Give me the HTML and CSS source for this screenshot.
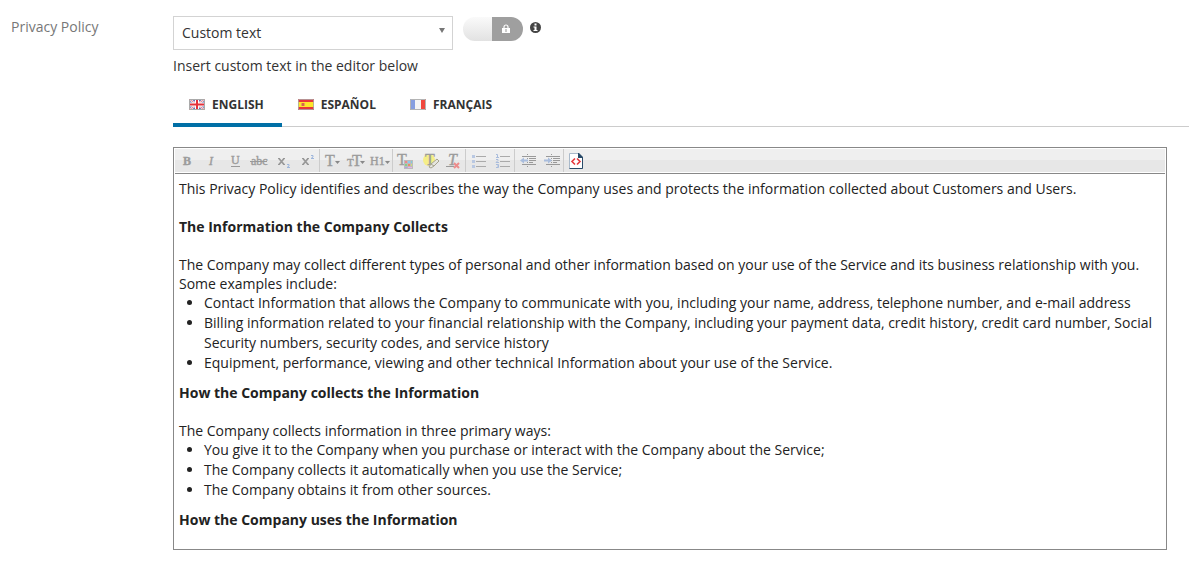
FILE: index.html
```html
<!DOCTYPE html>
<html lang="en">
<head>
	<meta charset="UTF-8">
	<title>Privacy Policy</title>
	<link rel="stylesheet" href="styles.css">
</head>
<body>
	<form class="field" action="##">
		<label class="field-label" for="policy">Privacy Policy</label>
		<div class="field-main">
			<div class="controls">
				<div class="select-wrap">
					<select class="select" id="policy">
						<option>Custom text</option>
					</select>
					<svg class="arrow" width="6" height="5" viewBox="0 0 6 5"><path d="M0 0h6L3 5z" fill="#777"/></svg>
				</div>
				<label class="switch">
					<input class="switch-input" type="checkbox" aria-label="Lock setting">
					<svg class="lock" width="8" height="9" viewBox="0 0 8 9">
						<path d="M2 4V3a2 2 0 0 1 4 0v1" fill="none" stroke="#fff" stroke-width="1.2"/>
						<path d="M0 4h8v5H0z" fill="#fff"/>
						<path d="M3.5 5h1v3h-1z" fill="#999"/>
					</svg>
				</label>
				<button class="info" type="button" aria-label="Help">
					<svg width="11" height="11" viewBox="0 0 11 11">
						<circle cx="5.5" cy="5.5" r="5.5" fill="#444"/>
						<path d="M4.5 1.5h2v2h-2zM3.5 4.5h3V8h1v1h-4V8h1V5.5h-1z" fill="#fff"/>
					</svg>
				</button>
			</div>
			<p class="hint">Insert custom text in the editor below</p>

			<div class="tabs" role="tablist">
				<button class="tab active" type="button" role="tab" aria-selected="true">
					<svg width="16" height="11" viewBox="0 0 16 11">
						<path d="M0 0h16v11H0z" fill="#6670b8"/>
						<path d="M0 0l16 11M16 0L0 11" stroke="#fff" stroke-width="2"/>
						<path d="M0 0l16 11M16 0L0 11" stroke="#e06068" stroke-width=".8"/>
						<path d="M8 0v11M0 5.5h16" stroke="#fff" stroke-width="4"/>
						<path d="M8 0v11M0 5.5h16" stroke="#e4303c" stroke-width="2"/>
						<path d="M.5.5h15v10H.5z" fill="none" stroke="#aaa"/>
					</svg>
					ENGLISH
				</button>
				<button class="tab" type="button" role="tab" aria-selected="false">
					<svg width="16" height="11" viewBox="0 0 16 11">
						<path d="M0 0h16v11H0z" fill="#e8363a"/>
						<path d="M0 3h16v5H0z" fill="#ffe529"/>
						<path d="M3 4h1v3H3zM6 4h1v3H6z" fill="#e5a550"/>
						<path d="M4 4h2v3H4z" fill="#d9634a"/>
						<path d="M.5.5h15v10H.5z" fill="none" stroke="#aaa" stroke-opacity=".8"/>
					</svg>
					ESPAÑOL
				</button>
				<button class="tab" type="button" role="tab" aria-selected="false">
					<svg width="16" height="11" viewBox="0 0 16 11">
						<path d="M0 0h5v11H0z" fill="#869ee0"/>
						<path d="M5 0h6v11H5z" fill="#f4f4f4"/>
						<path d="M11 0h5v11h-5z" fill="#f0483e"/>
						<path d="M.5.5h15v10H.5z" fill="none" stroke="#b4b4b4"/>
					</svg>
					FRANÇAIS
				</button>
			</div>

			<div class="editor">
				<div class="toolbar" role="toolbar" aria-label="Formatting">
					<div class="group">
						<button class="tool" type="button" title="Bold">
							<svg class="icon" viewBox="0 0 24 24"><text class="glyph bold" x="8" y="16">B</text></svg>
						</button>
						<button class="tool" type="button" title="Italic">
							<svg class="icon" viewBox="0 0 24 24"><text class="glyph italic" x="10" y="16">I</text></svg>
						</button>
						<button class="tool" type="button" title="Underline">
							<svg class="icon" viewBox="0 0 24 24">
								<text class="glyph" x="8" y="15">U</text>
								<path d="M8 17.500h9" stroke="#999"/>
							</svg>
						</button>
						<button class="tool" type="button" title="Strikethrough">
							<svg class="icon" viewBox="0 0 24 24">
								<text class="glyph" x="4" y="16">abc</text>
								<path d="M3 12.500h17" stroke="#999"/>
							</svg>
						</button>
						<button class="tool" type="button" title="Subscript">
							<svg class="icon" viewBox="0 0 24 24">
								<path d="M8 9.500l5 6M13 9.500l-5 6" stroke="#999" stroke-width="1.800"/>
								<path d="M7 9.500h2M12 9.500h2M7 15.500h2M12 15.500h2" stroke="#999"/>
								<path d="M16 15.500h2v1.500l-2 1.500h3" fill="none" stroke="#9fb7dc"/>
							</svg>
						</button>
						<button class="tool" type="button" title="Superscript">
							<svg class="icon" viewBox="0 0 24 24">
								<path d="M8 9.500l5 6M13 9.500l-5 6" stroke="#999" stroke-width="1.800"/>
								<path d="M7 9.500h2M12 9.500h2M7 15.500h2M12 15.500h2" stroke="#999"/>
								<path d="M16 6.500h2V8l-2 1.500h3" fill="none" stroke="#9fb7dc"/>
							</svg>
						</button>
					</div>
					<div class="group">
						<button class="tool" type="button" title="Font">
							<svg class="icon" viewBox="0 0 24 24">
								<text class="glyph large" x="5" y="17">T</text>
								<path d="M15 12h5l-2.500 3z" fill="#888"/>
							</svg>
						</button>
						<button class="tool" type="button" title="Font size">
							<svg class="icon" viewBox="0 0 24 24">
								<text class="glyph small" x="3" y="17">T</text>
								<text class="glyph large" x="8" y="17">T</text>
								<path d="M16 12h5l-2.500 3z" fill="#888"/>
							</svg>
						</button>
						<button class="tool" type="button" title="Heading">
							<svg class="icon" viewBox="0 0 24 24">
								<text class="glyph" x="2" y="16">H1</text>
								<path d="M17 12h5l-2.500 3z" fill="#888"/>
							</svg>
						</button>
					</div>
					<div class="group">
						<button class="tool" type="button" title="Text color">
							<svg class="icon" viewBox="0 0 24 24">
								<text class="glyph large" x="4" y="16">T</text>
								<path d="M11 11h9v9h-9z" fill="#bbb"/>
								<path d="M12 12h2v2h-2z" fill="#ef8888"/>
								<path d="M15 12h2v2h-2z" fill="#8cc8f0"/>
								<path d="M18 12h1v2h-1z" fill="#7dcce0"/>
								<path d="M12 15h2v2h-2z" fill="#85d089"/>
								<path d="M15 15h2v2h-2z" fill="#e88d68"/>
								<path d="M18 15h1v2h-1z" fill="#d0dd77"/>
								<path d="M12 18h2v1h-2z" fill="#a8a0e8"/>
								<path d="M15 18h4v1h-4z" fill="#e9b0e9"/>
							</svg>
						</button>
						<button class="tool" type="button" title="Highlight">
							<svg class="icon" viewBox="0 0 24 24">
								<circle cx="12" cy="11" r="6" fill="#f5ee87"/>
								<text class="glyph large" x="8" y="16">T</text>
								<path d="M12 18l2-3 6-5 2 2-5 5-3 2z" fill="#e5e5df" stroke="#a5a38e"/>
								<path d="M14 15l3 2" stroke="#a5a38e"/>
							</svg>
						</button>
						<button class="tool" type="button" title="Remove formatting">
							<svg class="icon" viewBox="0 0 24 24">
								<text class="glyph large italic" x="7" y="16">T</text>
								<path d="M5 17.500h8" stroke="#999"/>
								<path d="M13 14l5 5M18 14l-5 5" stroke="#ed8c8c" stroke-width="2"/>
							</svg>
						</button>
					</div>
					<div class="group">
						<button class="tool" type="button" title="Bullet list">
							<svg class="icon" viewBox="0 0 24 24">
								<path d="M10 7.500h10M10 12.500h10M10 17.500h10" stroke="#aaa"/>
								<path d="M6 6h3v3H6zM6 11h3v3H6zM6 16h3v3H6z" fill="#b9c8e2"/>
							</svg>
						</button>
						<button class="tool" type="button" title="Numbered list">
							<svg class="icon" viewBox="0 0 24 24">
								<path d="M10 7.500h10M10 12.500h10M10 17.500h10" stroke="#aaa"/>
								<path d="M6 5.500h1.500v3M6 8.500h3M6 10.500h2v1l-2 2h3M6 15.500h2.500v3H6M7 17h1" fill="none" stroke="#a9bcdc"/>
							</svg>
						</button>
					</div>
					<div class="group">
						<button class="tool" type="button" title="Outdent">
							<svg class="icon" viewBox="0 0 24 24">
								<path d="M7 7.500h14M14 9.500h7M14 11.500h7M14 13.500h4M7 15.500h14" stroke="#999"/>
								<path d="M12.500 5v14" stroke="#999" stroke-dasharray="1 1"/>
								<path d="M5 11.500l4-3v2h4v2H9v2z" fill="#a9bddd"/>
							</svg>
						</button>
						<button class="tool" type="button" title="Indent">
							<svg class="icon" viewBox="0 0 24 24">
								<path d="M7 7.500h14M14 9.500h7M14 11.500h7M14 13.500h4M7 15.500h14" stroke="#999"/>
								<path d="M12.500 5v14" stroke="#999" stroke-dasharray="1 1"/>
								<path d="M13 11.500l-4-3v2H5v2h4v2z" fill="#a9bddd"/>
							</svg>
						</button>
					</div>
					<button class="tool" type="button" title="Show source">
						<svg class="icon" viewBox="0 0 24 24">
							<path d="M5.500 4.500h9l4 4v11h-13z" fill="#fff" stroke="#a9b9ca"/>
							<path d="M18.500 8v11.500h-13" fill="none" stroke="#294a68"/>
							<path d="M14 4h1l4 4v1h-5z" fill="#294a68"/>
							<path d="M11 9.500L8 12.500l3 3M13 9.500l3 3-3 3" fill="none" stroke="#e5393e" stroke-width="1.600"/>
						</svg>
					</button>
				</div>
				<div class="content" contenteditable="true" role="textbox" aria-multiline="true" aria-label="Privacy Policy text" spellcheck="false">
					<p>This Privacy Policy identifies and describes the way the Company uses and protects the information collected about Customers and Users.</p>
					<h2>The Information the Company Collects</h2>
					<p>The Company may collect different types of personal and other information based on your use of the Service and its business relationship with you. Some examples include:</p>
					<ul>
						<li>Contact Information that allows the Company to communicate with you, including your name, address, telephone number, and e-mail address</li>
						<li>Billing information related to your financial relationship with the Company, including your payment data, credit history, credit card number, Social Security numbers, security codes, and service history</li>
						<li>Equipment, performance, viewing and other technical Information about your use of the Service.</li>
					</ul>
					<h2>How the Company collects the Information</h2>
					<p>The Company collects information in three primary ways:</p>
					<ul>
						<li>You give it to the Company when you purchase or interact with the Company about the Service;</li>
						<li>The Company collects it automatically when you use the Service;</li>
						<li>The Company obtains it from other sources.</li>
					</ul>
					<h2>How the Company uses the Information</h2>
				</div>
			</div>
		</div>
	</form>
</body>
</html>
```
FILE: styles.css
```css
* {
	box-sizing: border-box;
}

body {
	margin: 0;
	font: 14px/20px "Open Sans", sans-serif;
	color: #333;
	background: #fff;
}

button {
	padding: 0;
	border: 0;
	background: none;
	font: inherit;
	color: inherit;
}

svg {
	display: block;
}

.field {
	display: flex;
	padding: 16px 0 0 11px;
}

.field-label {
	flex: 0 0 162px;
	padding-top: 1px;
	color: #777;
}

.field-main {
	flex: 1;
	min-width: 0;
}

.controls {
	display: flex;
	align-items: flex-start;
}

.select-wrap {
	position: relative;
	width: 280px;
	margin-right: 10px;
}

.select {
	display: block;
	width: 100%;
	height: 34px;
	padding: 0 24px 0 8px;
	border: 1px solid #d3d3d3;
	border-radius: 0;
	background: #fff;
	font: inherit;
	color: inherit;
	-webkit-appearance: none;
	appearance: none;
}

.arrow {
	position: absolute;
	top: 12px;
	right: 8px;
	pointer-events: none;
}

.switch {
	position: relative;
	margin: 1px 7px 0 0;
}

.switch-input {
	display: block;
	width: 60px;
	height: 24px;
	margin: 0;
	border-radius: 12px;
	background: linear-gradient(#9f9f9f, #9f9f9f) right / 31px 100% no-repeat, linear-gradient(#fafafa, #e2e2e2);
	-webkit-appearance: none;
	appearance: none;
}

.lock {
	position: absolute;
	top: 7px;
	right: 13px;
	pointer-events: none;
}

.info {
	margin-top: 6px;
}

.hint {
	margin: 6px 0;
}

/* language tabs */
.tabs {
	display: flex;
	border-bottom: 1px solid #ccc;
}

.tab {
	display: flex;
	align-items: center;
	gap: 7px;
	height: 45px;
	margin-bottom: -1px;
	padding: 4px 18px 0 16px;
	border-bottom: 4px solid transparent;
	font-size: 12px;
	font-weight: bold;
}

.tab.active {
	border-color: #006fa6;
}

/* editor */
.editor {
	margin: 20px 22px 0 0;
	border: 1px solid #888;
}

.toolbar {
	display: flex;
	height: 26px;
	margin: 0 1px;
	padding: 1px 0;
	border-bottom: 1px solid #888;
	background: linear-gradient(#efefef 50%, #e7e7e7 50%) content-box;
}

.group {
	display: flex;
	border-right: 1px solid #ccc;
}

.tool {
	width: 24px;
}

.icon {
	width: 24px;
	height: 24px;
}

.glyph {
	font: 12px "Liberation Serif", serif;
	fill: #9c9c9c;
	stroke: #9c9c9c;
	stroke-width: .4px;
}

.glyph.bold {
	font-weight: bold;
}

.glyph.italic {
	font-style: italic;
}

.glyph.large {
	font-size: 16px;
}

.glyph.small {
	font-size: 11px;
}

.content {
	padding: 5px 5px 20px;
	font: 14px/19px "Open Sans", sans-serif;
	color: #222;
	outline: 0;
}

.content p,
.content h2 {
	margin: 0;
}

.content h2 {
	font-size: 14px;
	line-height: 19px;
}

.content p + h2,
.content h2 + p {
	margin-top: 19px;
}

.content ul {
	margin: 0 0 10px;
	padding-left: 25px;
	line-height: 20px;
}
```
